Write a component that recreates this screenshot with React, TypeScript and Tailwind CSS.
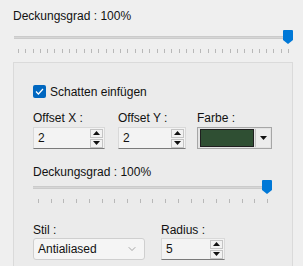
import { ChevronDown } from 'lucide-react'

const font = { fontFamily: '"Liberation Sans", Arial, sans-serif' }

function Thumb() {
  return (
    <svg width="10" height="14" viewBox="0 0 10 14" className="block">
      <path d="M1 0 H9 A1 1 0 0 1 10 1 V10 L5 14 L0 10 V1 A1 1 0 0 1 1 0 Z" fill="#0078d7" />
    </svg>
  )
}

function Slider({ ticks, tickPad, widthClass }: { ticks: number; tickPad: string; widthClass: string }) {
  return (
    <div className={`relative ${widthClass}`}>
      <div className="h-[14px] flex items-center">
        <div className="w-full h-[3px] bg-[#d6d6d6] border-y border-[#cbcbcb]" />
      </div>
      <div className="absolute right-0 top-0">
        <Thumb />
      </div>
      <div className={`flex justify-between mt-[5px] ${tickPad}`}>
        {Array.from({ length: ticks }).map((_, i) => (
          <div key={i} className="w-px h-[4px] bg-[#b8b8b8]" />
        ))}
      </div>
    </div>
  )
}

function Spinner() {
  return (
    <div className="flex flex-col gap-px">
      <div className="w-[13px] h-[9px] border border-[#c4c4c4] bg-[#f2f2f2] flex items-center justify-center">
        <svg width="7" height="4" viewBox="0 0 7 4"><path d="M3.5 0 L7 4 H0 Z" fill="#111" /></svg>
      </div>
      <div className="w-[13px] h-[9px] border border-[#c4c4c4] bg-[#f2f2f2] flex items-center justify-center">
        <svg width="7" height="4" viewBox="0 0 7 4"><path d="M0 0 H7 L3.5 4 Z" fill="#111" /></svg>
      </div>
    </div>
  )
}

function NumBox({ value, widthClass }: { value: string; widthClass: string }) {
  return (
    <div className={`${widthClass} h-[22px] bg-[#f3f3f3] border border-[#d9d9d9] border-b-[#7a7a7a] flex items-center justify-between pl-[4px] pr-px`}>
      <span className="text-[12px] text-[#111]">{value}</span>
      <Spinner />
    </div>
  )
}

export default function App() {
  return (
    <div className="w-[303px] h-[266px] overflow-hidden bg-[#efefef] text-[#111]" style={font}>
      <div className="pl-[13px] pt-[8px]">
        <div className="text-[12px] leading-[16px]">Deckungsgrad : 100%</div>
        <div className="mt-[6px] pl-px">
          <Slider ticks={38} tickPad="pl-[4px] pr-[4px]" widthClass="w-[279px]" />
        </div>

        <div className="mt-[9px] w-[280px] h-[220px] border border-[#dadada] bg-[#ebebeb] pl-[19px] pt-[22px]">
          <div className="flex items-center gap-[4px] h-[13px]">
            <div className="w-[13px] h-[13px] rounded-[2px] bg-[#0067c0] flex items-center justify-center">
              <svg width="9" height="7" viewBox="0 0 9 7">
                <path d="M1 3.5 L3.4 6 L8 1" stroke="#fff" strokeWidth="1.2" fill="none" />
              </svg>
            </div>
            <span className="text-[12px] leading-[16px]">Schatten einfügen</span>
          </div>

          <div className="flex mt-[12px]">
            <div className="w-[85px]">
              <div className="text-[12px] leading-[16px] h-[17px]">Offset X :</div>
              <NumBox value="2" widthClass="w-[72px]" />
            </div>
            <div className="w-[79px]">
              <div className="text-[12px] leading-[16px] h-[17px]">Offset Y :</div>
              <NumBox value="2" widthClass="w-[68px]" />
            </div>
            <div>
              <div className="text-[12px] leading-[16px] h-[17px]">Farbe :</div>
              <div className="w-[75px] h-[22px] border border-[#a6a6a6] bg-[#e3e3e3] flex items-center p-[1px]">
                <div className="w-[54px] h-[18px] bg-[#2f4f33] border border-[#1f1f1f] ml-px" />
                <div className="flex-1 h-full flex items-center justify-center border-l border-[#c4c4c4] ml-[1px] bg-[#ececec]">
                  <svg width="7" height="4" viewBox="0 0 7 4"><path d="M0 0 H7 L3.5 4 Z" fill="#111" /></svg>
                </div>
              </div>
            </div>
          </div>

          <div className="mt-[15px] text-[12px] leading-[16px]">Deckungsgrad : 100%</div>
          <div>
            <Slider ticks={19} tickPad="pl-[5px] pr-[4px]" widthClass="w-[239px]" />
          </div>

          <div className="flex mt-[19px]">
            <div className="w-[128px]">
              <div className="text-[12px] leading-[16px] h-[16px]">Stil :</div>
              <div className="w-[112px] h-[22px] rounded-[3px] border border-[#cfcfcf] bg-[#f5f5f5] flex items-center justify-between pl-[4px] pr-[6px]">
                <span className="text-[12px]">Antialiased</span>
                <ChevronDown size={12} strokeWidth={1} color="#555" />
              </div>
            </div>
            <div>
              <div className="text-[12px] leading-[16px] h-[16px]">Radius :</div>
              <NumBox value="5" widthClass="w-[64px]" />
            </div>
          </div>
        </div>
      </div>
    </div>
  )
}
